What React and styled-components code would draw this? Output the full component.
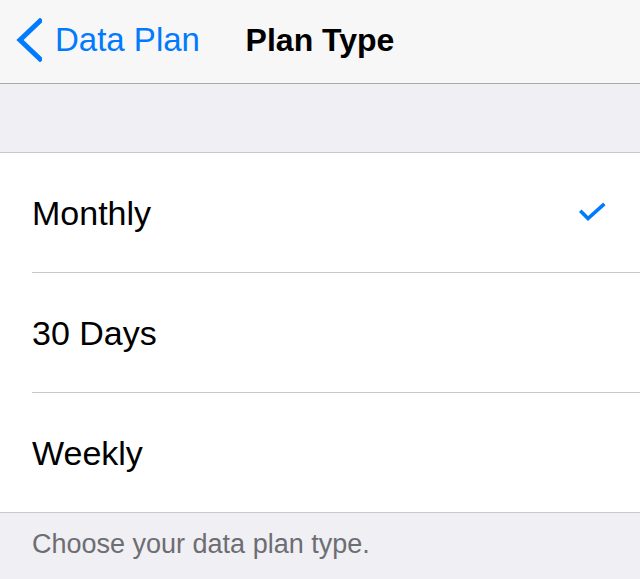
import React from "react";
import styled, { createGlobalStyle } from "styled-components";

const Global = createGlobalStyle`
  html, body { margin: 0; padding: 0; background: #efeff4; }
  body { font-family: "Liberation Sans", Arial, sans-serif; -webkit-font-smoothing: antialiased; }
`;

const Screen = styled.div`
  width: 640px;
  height: 579px;
  background: #efeff4;
  display: flex;
  flex-direction: column;
  overflow: hidden;
`;

const NavBar = styled.div`
  height: 84px;
  box-sizing: border-box;
  padding-bottom: 4px;
  background: #f7f7f7;
  border-bottom: 1px solid #a9a9ac;
  display: grid;
  grid-template-columns: 1fr auto 1fr;
  align-items: center;
  flex-shrink: 0;
`;

const BackButton = styled.div`
  display: flex;
  align-items: center;
  gap: 13px;
  padding-left: 16px;
  color: #007aff;
  font-size: 33px;
  line-height: 1;
`;

const Title = styled.div`
  font-size: 32px;
  font-weight: bold;
  color: #000;
  line-height: 1;
`;

const Spacer = styled.div`
  height: 68px;
  flex-shrink: 0;
`;

const Group = styled.div`
  background: #fff;
  border-top: 1px solid #c8c7cc;
  border-bottom: 1px solid #c8c7cc;
  display: flex;
  flex-direction: column;
`;

const Row = styled.div`
  height: 119px;
  display: flex;
  align-items: center;
  justify-content: space-between;
  padding: 0 34px 0 32px;
  font-size: 34px;
  color: #000;
  line-height: 1;
`;

const Separator = styled.div`
  height: 1px;
  margin-left: 32px;
  background: #c8c7cc;
`;

const Footer = styled.div`
  padding: 15px 32px 0;
  font-size: 27px;
  line-height: 32px;
  color: #6d6d72;
`;

const Chevron = () => (
  <svg width="26" height="44" viewBox="0 0 26 44">
    <path d="M24 3 L4 22 L24 41" fill="none" stroke="#007aff" strokeWidth="5" strokeLinecap="square" strokeLinejoin="miter" />
  </svg>
);

const Check = () => (
  <svg width="27" height="22" viewBox="0 0 27 22">
    <path d="M2.5 10 L9 16.5 L24 3" fill="none" stroke="#007aff" strokeWidth="3.6" strokeLinecap="square" />
  </svg>
);

const items = [
  { label: "Monthly", selected: true },
  { label: "30 Days" },
  { label: "Weekly" },
];

export default function App() {
  return (
    <Screen>
      <Global />
      <NavBar>
        <BackButton>
          <Chevron />
          <span>Data Plan</span>
        </BackButton>
        <Title>Plan Type</Title>
        <div />
      </NavBar>
      <Spacer />
      <Group>
        {items.map((it, i) => (
          <React.Fragment key={it.label}>
            {i > 0 && <Separator />}
            <Row>
              <span>{it.label}</span>
              {it.selected && <Check />}
            </Row>
          </React.Fragment>
        ))}
      </Group>
      <Footer>Choose your data plan type.</Footer>
    </Screen>
  );
}
